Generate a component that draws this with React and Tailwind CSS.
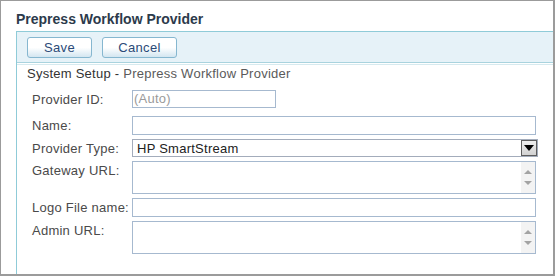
import React from "react";

const font = { fontFamily: '"Liberation Sans", Arial, sans-serif' };

function ScrollBox() {
  return (
    <div className="flex h-[33px] w-[404px] border border-[#a6b9cf] bg-white">
      <div className="flex-1" />
      <div className="flex w-[14px] flex-col items-center justify-between bg-[#f3f3f3] py-[7px]">
        <svg width="8" height="5" viewBox="0 0 8 5"><path d="M0 5 L4 1 L8 5 Z" fill="#a3a3a3" /></svg>
        <svg width="8" height="5" viewBox="0 0 8 5"><path d="M0 0 L8 0 L4 4 Z" fill="#a3a3a3" /></svg>
      </div>
    </div>
  );
}

function Label({ children }) {
  return <div className="w-[100px] shrink-0 pt-[2px] text-[13px] leading-[15px] tracking-[0.25px] text-[#4a4a4a]">{children}</div>;
}

function Btn({ children, w }) {
  return (
    <button
      className={`h-[21px] ${w} rounded-[3px] border border-[#86b7d0] bg-gradient-to-b from-white via-white to-[#d3e6f1] text-[13px] leading-[19px] tracking-[0.3px] text-[#2b4a78]`}
    >
      {children}
    </button>
  );
}

export default function App() {
  return (
    <div
      style={font}
      className="flex h-[276px] w-[555px] flex-col border-t border-l border-r-2 border-b-2 border-[#9b9b9b] bg-white"
    >
      <div className="h-[30px] pl-[15px] pt-[10px] text-[14px] font-bold leading-[17px] text-[#2c3a4b]">
        Prepress Workflow Provider
      </div>
      <div className="ml-[15px] flex flex-1 flex-col border-l border-t border-[#8fcbd8]">
        <div className="flex h-[31px] items-start gap-[10px] border-b border-[#a9d3de] bg-[#e6f2f8] pl-[10px] pt-[5px]">
          <Btn w="w-[65px]">Save</Btn>
          <Btn w="w-[75px]">Cancel</Btn>
        </div>
        <div className="mt-[1px] h-px bg-[#d6eaef]" />
        <div className="pl-[10px] pt-[1px] text-[13px] leading-[15px] tracking-[0.25px] text-[#333]">
          System Setup - <span className="text-[#5a5a5a]">Prepress Workflow Provider</span>
        </div>
        <div className="ml-[15px] mt-[9px] flex flex-col">
          <div className="flex items-start">
            <Label>Provider ID:</Label>
            <div className="flex h-[18px] w-[144px] items-center border border-[#a6b9cf] pl-[1px] text-[13px] tracking-[0.25px] text-[#9a9a9a]">
              (Auto)
            </div>
          </div>
          <div className="mt-[8px] flex items-start">
            <Label>Name:</Label>
            <div className="h-[19px] w-[404px] border border-[#a6b9cf]" />
          </div>
          <div className="mt-[4px] flex items-start">
            <Label>Provider Type:</Label>
            <div className="flex h-[18px] w-[406px] items-center border border-[#a3acbb] pl-[4px]">
              <span className="flex-1 text-[13px] leading-[15px] tracking-[0.25px] text-[#222]">HP SmartStream</span>
              <div className="flex h-[16px] w-[16px] items-center justify-center border border-[#5d5d5d] bg-gradient-to-b from-[#eeeeee] to-[#d2d2d2]">
                <svg width="10" height="6" viewBox="0 0 10 6"><path d="M0 0 L10 0 L5 6 Z" fill="#000" /></svg>
              </div>
            </div>
          </div>
          <div className="mt-[4px] flex items-start">
            <Label>Gateway URL:</Label>
            <ScrollBox />
          </div>
          <div className="mt-[4px] flex items-start">
            <Label>Logo File name:</Label>
            <div className="h-[19px] w-[404px] border border-[#a6b9cf]" />
          </div>
          <div className="mt-[4px] flex items-start">
            <Label>Admin URL:</Label>
            <ScrollBox />
          </div>
        </div>
      </div>
    </div>
  );
}
